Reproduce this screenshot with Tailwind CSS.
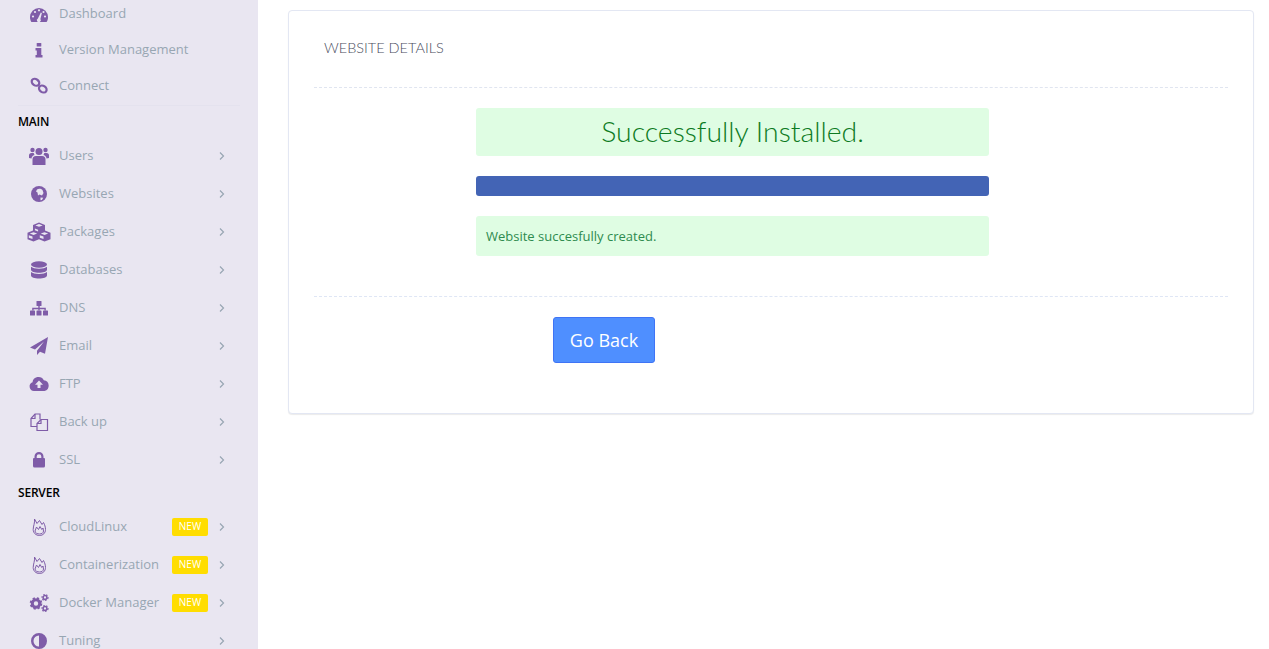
<!DOCTYPE html>
<html lang="en">

<head>
  <meta charset="UTF-8" />
  <meta name="viewport" content="width=device-width, initial-scale=1.0" />
  <title>Website Details</title>
  <script src="https://cdn.jsdelivr.net/npm/@tailwindcss/browser@4"></script>
</head>

<body class="bg-white font-['Open_Sans',sans-serif] overflow-hidden">
  <div class="flex h-[649px] overflow-hidden">

    <!-- Sidebar -->
    <aside class="w-[258px] shrink-0 h-[649px] overflow-hidden bg-[#e9e6f1] text-[13px] text-[#98a6b3]">
      <div class="-mt-[4px]">
        <a class="flex items-center h-[36px] pl-[29px]">
          <svg class="w-5 h-5 mr-[10px] fill-[#7f5ca8]" viewBox="0 0 20 20">
            <path d="M1 13a9 9 0 0 1 18 0c0 1.900-.5 3.600-1.400 5H2.400C1.500 16.600 1 14.900 1 13z" />
            <g fill="#e9e6f1">
              <circle cx="4" cy="12.500" r="1.100" /><circle cx="6" cy="8" r="1.100" /><circle cx="10" cy="6.300" r="1.100" /><circle cx="14.500" cy="8" r="1.100" /><circle cx="16" cy="12.500" r="1.100" />
              <path d="M11.800 8.500l1.100.4-1.500 6a2 2 0 1 1-2.500-.5z" />
            </g>
          </svg>
          <span>Dashboard</span>
        </a>
        <a class="flex items-center h-[36px] pl-[29px]">
          <svg class="w-5 h-5 mr-[10px] fill-[#7f5ca8]" viewBox="0 0 20 20">
            <rect x="7.700" y="3" width="4.600" height="3.500" rx=".6" />
            <path d="M6.500 8h5.800v7h1.200v2.500h-7V15h1.300v-4.500H6.500z" />
          </svg>
          <span>Version Management</span>
        </a>
        <a class="flex items-center h-[36px] pl-[29px]">
          <svg class="w-5 h-5 mr-[10px] fill-none stroke-[#7f5ca8] stroke-[2.200]" viewBox="0 0 20 20">
            <ellipse cx="6.500" cy="6.300" rx="4.100" ry="3.100" transform="rotate(35 6.500 6.300)" />
            <ellipse cx="13.800" cy="13" rx="4.100" ry="3.200" transform="rotate(35 13.800 13)" />
          </svg>
          <span>Connect</span>
        </a>
      </div>

      <div class="mx-[18px] h-[33px] pt-[1px] relative">
        <div class="h-px bg-[#e4e2ee]"></div>
        <p class="mt-[7px] text-[12px] leading-[18px] font-semibold tracking-[-0.2px] text-black">MAIN</p>
      </div>

      <a class="flex items-center h-[38px] pl-[29px] pr-[33px]">
        <svg class="w-5 h-5 mr-[10px] fill-[#7f5ca8]" viewBox="0 0 20 20">
          <circle cx="10" cy="5.500" r="3.500" /><circle cx="3.500" cy="4" r="2.200" /><circle cx="16.500" cy="4" r="2.200" />
          <path d="M3.500 19v-5.500a3.500 3.500 0 0 1 3.500-3.500h6a3.500 3.500 0 0 1 3.500 3.500V19z" />
          <path d="M0 12V9.500A2.500 2.500 0 0 1 2.500 7h2.200l.8 2c-2 .6-3 2-3 3.500zM20 12V9.500A2.500 2.500 0 0 0 17.500 7h-2.200l-.8 2c2 .6 3 2 3 3.500z" />
        </svg>
        <span>Users</span>
        <svg class="w-[6px] h-[10px] ml-auto fill-none stroke-[#98a6b3] stroke-[1.200]" viewBox="0 0 6 10"><path d="M1 1.500L4.500 5 1 8.500" /></svg>
      </a>
      <a class="flex items-center h-[38px] pl-[29px] pr-[33px]">
        <svg class="w-5 h-5 mr-[10px] fill-[#7f5ca8]" viewBox="0 0 20 20">
          <circle cx="10" cy="10" r="8" />
          <path fill="#e9e6f1" d="M8 5.500C9.500 4.500 12 4.500 13.500 6l1 3-1.500 2.500-2.500-1L9 11.500l-.5-3L7 7.500zM11.500 13.500l2.700.2-1.200 2.300-1.500.2z" />
        </svg>
        <span>Websites</span>
        <svg class="w-[6px] h-[10px] ml-auto fill-none stroke-[#98a6b3] stroke-[1.200]" viewBox="0 0 6 10"><path d="M1 1.500L4.500 5 1 8.500" /></svg>
      </a>
      <a class="flex items-center h-[38px] pl-[29px] pr-[33px]">
        <svg class="w-[24px] h-5 -ml-[2px] mr-[8px] fill-[#7f5ca8]" viewBox="0 0 24 20">
          <path d="M12 .5l6 2.400v5.600l5.500 2.200v6.600l-6 2.200-5.500-2.200-5.500 2.200-6-2.200v-6.600L6 8.500V2.900z" />
          <g fill="#e9e6f1">
            <path d="M12 2l3.700 1.400L12 4.800 8.300 3.400z" />
            <path d="M6.500 10.200l3.700 1.400-3.700 1.400-3.700-1.400z" />
            <path d="M17.500 10.200l3.700 1.400-3.700 1.400-3.700-1.400z" />
            <path d="M1.800 13.200l3.700 1.400v2.500l-3.700-1.400zM12.800 13.200l3.700 1.400v2.500l-3.700-1.400zM7.900 6.500l3.200 1.300v1.700L7.900 8.200z" />
          </g>
        </svg>
        <span>Packages</span>
        <svg class="w-[6px] h-[10px] ml-auto fill-none stroke-[#98a6b3] stroke-[1.200]" viewBox="0 0 6 10"><path d="M1 1.500L4.500 5 1 8.500" /></svg>
      </a>
      <a class="flex items-center h-[38px] pl-[29px] pr-[33px]">
        <svg class="w-5 h-5 mr-[10px] fill-[#7f5ca8]" viewBox="0 0 20 20">
          <ellipse cx="10" cy="4.500" rx="8" ry="3.200" />
          <path d="M2 6.800c1.500 1.300 4.500 2 8 2s6.500-.7 8-2v3c0 1.700-3.600 3-8 3s-8-1.300-8-3z" />
          <path d="M2 12c1.500 1.300 4.500 2 8 2s6.500-.7 8-2v3.500c0 1.700-3.600 3-8 3s-8-1.300-8-3z" />
        </svg>
        <span>Databases</span>
        <svg class="w-[6px] h-[10px] ml-auto fill-none stroke-[#98a6b3] stroke-[1.200]" viewBox="0 0 6 10"><path d="M1 1.500L4.500 5 1 8.500" /></svg>
      </a>
      <a class="flex items-center h-[38px] pl-[29px] pr-[33px]">
        <svg class="w-5 h-5 mr-[10px] fill-[#7f5ca8]" viewBox="0 0 20 20">
          <rect x="7.500" y="3" width="5" height="5" rx=".6" /><rect x="1" y="12.500" width="5" height="5" rx=".6" /><rect x="7.500" y="12.500" width="5" height="5" rx=".6" /><rect x="14" y="12.500" width="5" height="5" rx=".6" />
          <path d="M9.300 8h1.400v1.800h6.100v2.700h-1.400v-1.300h-4.700v1.300H9.300v-1.300H4.600v1.300H3.200V9.800h6.100z" />
        </svg>
        <span>DNS</span>
        <svg class="w-[6px] h-[10px] ml-auto fill-none stroke-[#98a6b3] stroke-[1.200]" viewBox="0 0 6 10"><path d="M1 1.500L4.500 5 1 8.500" /></svg>
      </a>
      <a class="flex items-center h-[38px] pl-[29px] pr-[33px]">
        <svg class="w-5 h-5 mr-[10px] fill-[#7f5ca8]" viewBox="0 0 20 20">
          <path d="M19 1L1 11.500l5 2 9-8-7 9.200v4.300l3-3.300 5 2z" />
        </svg>
        <span>Email</span>
        <svg class="w-[6px] h-[10px] ml-auto fill-none stroke-[#98a6b3] stroke-[1.200]" viewBox="0 0 6 10"><path d="M1 1.500L4.500 5 1 8.500" /></svg>
      </a>
      <a class="flex items-center h-[38px] pl-[29px] pr-[33px]">
        <svg class="w-5 h-5 mr-[10px] fill-[#7f5ca8]" viewBox="0 0 20 20">
          <path d="M5 17a4.500 4.500 0 0 1-1.500-8.700A6 6 0 0 1 14.800 6.200 5.500 5.500 0 0 1 15.500 17z" />
          <path fill="#e9e6f1" d="M10 6.500l4 4.200h-2.500V14h-3v-3.300H6z" />
        </svg>
        <span>FTP</span>
        <svg class="w-[6px] h-[10px] ml-auto fill-none stroke-[#98a6b3] stroke-[1.200]" viewBox="0 0 6 10"><path d="M1 1.500L4.500 5 1 8.500" /></svg>
      </a>
      <a class="flex items-center h-[38px] pl-[29px] pr-[33px]">
        <svg class="w-5 h-5 mr-[10px] fill-none stroke-[#7f5ca8] stroke-[1.200]" viewBox="0 0 20 20">
          <path d="M8 14.500H2V6.500L6 2h5v5.500" />
          <path d="M6 2v4.500H2" />
          <path d="M12 7.500h6.500v11H8v-7z" />
          <path d="M12 7.500v4H8" />
        </svg>
        <span>Back up</span>
        <svg class="w-[6px] h-[10px] ml-auto fill-none stroke-[#98a6b3] stroke-[1.200]" viewBox="0 0 6 10"><path d="M1 1.500L4.500 5 1 8.500" /></svg>
      </a>
      <a class="flex items-center h-[38px] pl-[29px] pr-[33px]">
        <svg class="w-5 h-5 mr-[10px] fill-[#7f5ca8]" viewBox="0 0 20 20">
          <path fill-rule="evenodd" d="M5.500 8V6.500a4.500 4.500 0 0 1 9 0V8h.5a1 1 0 0 1 1 1v7a1.500 1.500 0 0 1-1.500 1.500h-9A1.500 1.500 0 0 1 4 16V9a1 1 0 0 1 1-1zM7.700 8h4.600V6.500a2.300 2.300 0 0 0-4.600 0z" />
        </svg>
        <span>SSL</span>
        <svg class="w-[6px] h-[10px] ml-auto fill-none stroke-[#98a6b3] stroke-[1.200]" viewBox="0 0 6 10"><path d="M1 1.500L4.500 5 1 8.500" /></svg>
      </a>

      <p class="ml-[18px] h-[29px] pt-[5px] text-[12px] leading-[18px] font-semibold tracking-[-0.2px] text-black">SERVER</p>

      <a class="flex items-center h-[38px] pl-[29px] pr-[33px]">
        <svg class="w-5 h-5 mr-[10px] fill-none stroke-[#7f5ca8] stroke-[1]" viewBox="0 0 20 20">
          <path d="M5.500 2L8 6.500l2.500-3L13 7.500l1.500-2c1.300 2.300 2 4.700 2 7 0 3.500-2.500 6-6 6s-6.300-2.500-6.300-6c0-3.500 1.800-6.500 1.300-10.500z" />
          <path d="M6 14l1.500-4 2 2.500 1.500-3 1.800 3 1.200-1.500.5 3c0 2-2 3-4 3s-4.500-1-4.500-3z" />
        </svg>
        <span>CloudLinux</span>
        <span class="ml-auto mr-[11px] w-[36px] h-[18px] rounded-[2px] bg-[#ffdd00] text-white text-[10px] leading-[16px] text-center">NEW</span>
        <svg class="w-[6px] h-[10px] fill-none stroke-[#98a6b3] stroke-[1.200]" viewBox="0 0 6 10"><path d="M1 1.500L4.500 5 1 8.500" /></svg>
      </a>
      <a class="flex items-center h-[38px] pl-[29px] pr-[33px]">
        <svg class="w-5 h-5 mr-[10px] fill-none stroke-[#7f5ca8] stroke-[1]" viewBox="0 0 20 20">
          <path d="M5.500 2L8 6.500l2.500-3L13 7.500l1.500-2c1.300 2.300 2 4.700 2 7 0 3.500-2.500 6-6 6s-6.300-2.500-6.300-6c0-3.500 1.800-6.500 1.300-10.500z" />
          <path d="M6 14l1.500-4 2 2.500 1.500-3 1.800 3 1.200-1.500.5 3c0 2-2 3-4 3s-4.500-1-4.500-3z" />
        </svg>
        <span>Containerization</span>
        <span class="ml-auto mr-[11px] w-[36px] h-[18px] rounded-[2px] bg-[#ffdd00] text-white text-[10px] leading-[16px] text-center">NEW</span>
        <svg class="w-[6px] h-[10px] fill-none stroke-[#98a6b3] stroke-[1.200]" viewBox="0 0 6 10"><path d="M1 1.500L4.500 5 1 8.500" /></svg>
      </a>
      <a class="flex items-center h-[38px] pl-[29px] pr-[33px]">
        <svg class="w-5 h-5 mr-[10px] fill-none stroke-[#7f5ca8]" viewBox="0 0 20 20">
          <circle cx="7" cy="10.500" r="3.700" stroke-width="3" />
          <circle cx="7" cy="10.500" r="5.300" stroke-width="2" stroke-dasharray="2.200 2" />
          <circle cx="16" cy="4.500" r="1.900" stroke-width="1.500" />
          <circle cx="16" cy="4.500" r="3" stroke-width="1.200" stroke-dasharray="1.500 1.500" />
          <circle cx="16" cy="15.500" r="1.900" stroke-width="1.500" />
          <circle cx="16" cy="15.500" r="3" stroke-width="1.200" stroke-dasharray="1.500 1.500" />
        </svg>
        <span>Docker Manager</span>
        <span class="ml-auto mr-[11px] w-[36px] h-[18px] rounded-[2px] bg-[#ffdd00] text-white text-[10px] leading-[16px] text-center">NEW</span>
        <svg class="w-[6px] h-[10px] fill-none stroke-[#98a6b3] stroke-[1.200]" viewBox="0 0 6 10"><path d="M1 1.500L4.500 5 1 8.500" /></svg>
      </a>
      <a class="flex items-center h-[38px] pl-[29px] pr-[33px]">
        <svg class="w-5 h-5 mr-[10px] fill-[#7f5ca8]" viewBox="0 0 20 20">
          <path fill-rule="evenodd" d="M10 2a8 8 0 1 1 0 16 8 8 0 0 1 0-16zm0 2.500a5.500 5.500 0 0 0 0 11z" />
        </svg>
        <span>Tuning</span>
        <svg class="w-[6px] h-[10px] ml-auto fill-none stroke-[#98a6b3] stroke-[1.200]" viewBox="0 0 6 10"><path d="M1 1.500L4.500 5 1 8.500" /></svg>
      </a>
    </aside>

    <!-- Main content -->
    <main class="flex-1 pl-[30px] pr-[15px] pt-[10px]">
      <section class="h-[404px] border border-[#e3e7f3] rounded-[4px] shadow-[0_1px_1px_rgba(0,0,0,0.08)] px-[25px] bg-white">
        <div class="h-[77px] border-b border-dashed border-[#e0e5f0] pl-[10px] pt-[27px]">
          <h2 class="font-['Lato',sans-serif] font-light text-[14.500px] leading-[20px] text-[#4a4d60]">WEBSITE DETAILS</h2>
        </div>

        <div class="h-[209px] border-b border-dashed border-[#dfe6f5] pl-[162px] pt-[20px]">
          <div class="w-[513px] flex flex-col gap-[20px]">
            <div class="h-[48px] bg-[#dffde3] rounded-[3px] text-center font-['Lato',sans-serif] font-light text-[28.400px] leading-[46px] text-[#0c7a22]">Successfully Installed.</div>
            <div class="h-[20px] bg-[#4364b5] rounded-[3px]"></div>
            <div class="h-[40px] bg-[#dffde3] rounded-[3px] pl-[10px] text-[13px] leading-[40px] text-[#2e8b4f]">Website succesfully created.</div>
          </div>
        </div>

        <div class="pl-[239px] pt-[20px]">
          <button class="w-[102px] h-[46px] bg-[#4f8fff] border border-[#3f74f5] rounded-[3px] text-white text-[18px]">Go Back</button>
        </div>
      </section>
    </main>
  </div>
</body>

</html>
